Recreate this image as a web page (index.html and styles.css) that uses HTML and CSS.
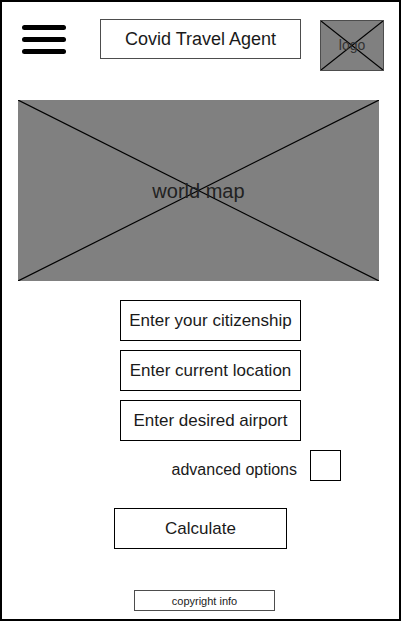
FILE: index.html
```html
<!DOCTYPE html>
<html lang="en">
<head>
<meta charset="utf-8">
<title>Covid Travel Agent</title>
<link rel="stylesheet" href="styles.css">
</head>
<body>
<div class="frame">
  <header class="header">
    <svg class="menu" width="45" height="32" viewBox="0 0 45 32" aria-label="menu">
      <line x1="2.5" y1="3.5" x2="41.5" y2="3.5"/>
      <line x1="2.5" y1="15.5" x2="41.5" y2="15.5"/>
      <line x1="2.5" y1="27.5" x2="41.5" y2="27.5"/>
    </svg>
    <div class="title">Covid Travel Agent</div>
    <div class="placeholder logo">
      <svg class="cross" viewBox="0 0 100 100" preserveAspectRatio="none"><line x1="0" y1="0" x2="100" y2="100" vector-effect="non-scaling-stroke"/><line x1="100" y1="0" x2="0" y2="100" vector-effect="non-scaling-stroke"/></svg>
      <span class="ph-label logo-label">logo</span>
    </div>
  </header>
  <div class="placeholder map">
    <svg class="cross" viewBox="0 0 100 100" preserveAspectRatio="none"><line x1="0" y1="0" x2="100" y2="100" vector-effect="non-scaling-stroke"/><line x1="100" y1="0" x2="0" y2="100" vector-effect="non-scaling-stroke"/></svg>
    <span class="ph-label map-label">world map</span>
  </div>
  <div class="form">
    <div class="field">Enter your citizenship</div>
    <div class="field">Enter current location</div>
    <div class="field">Enter desired airport</div>
  </div>
  <div class="advanced">
    <span class="adv-label">advanced options</span>
    <span class="checkbox"></span>
  </div>
  <div class="calc">Calculate</div>
  <div class="copyright">copyright info</div>
</div>
</body>
</html>
```

FILE: styles.css
```css
html, body {
  margin: 0;
  padding: 0;
  background: #fff;
}
body {
  font-family: "Liberation Sans", Arial, sans-serif;
  color: #1a1a1a;
}
.frame {
  width: 401px;
  height: 621px;
  box-sizing: border-box;
  border: 2px solid #000;
  display: flex;
  flex-direction: column;
  align-items: flex-start;
}
.header {
  display: flex;
  align-items: flex-start;
  height: 69px;
}
.menu {
  margin: 22px 0 0 20px;
  display: block;
}
.menu line {
  stroke: #000;
  stroke-width: 5;
  stroke-linecap: round;
}
.title {
  margin: 17px 0 0 33px;
  width: 201px;
  height: 40px;
  box-sizing: border-box;
  border: 1px solid #4d4d4d;
  display: flex;
  align-items: center;
  justify-content: center;
  font-size: 18px;
  color: #1a1a1a;
}
.placeholder {
  display: grid;
  background: #808080;
  box-sizing: border-box;
}
.placeholder > * {
  grid-area: 1 / 1;
}
.cross {
  width: 100%;
  height: 100%;
  display: block;
}
.cross line {
  stroke: #000;
  stroke-width: 1.2;
}
.ph-label {
  align-self: center;
  justify-self: center;
  color: #222;
}
.logo {
  margin: 18px 0 0 19px;
  width: 64px;
  height: 51px;
  border: 1px solid #4d4d4d;
}
.logo-label {
  font-size: 14px;
  color: #333;
  margin-bottom: 2px;
}
.map {
  margin: 29px 0 0 16px;
  width: 361px;
  height: 181px;
}
.map-label {
  font-size: 20px;
  margin-top: 2px;
}
.form {
  margin: 19px 0 0 118px;
  display: flex;
  flex-direction: column;
  gap: 9px;
}
.field, .calc {
  width: 181px;
  height: 41px;
  box-sizing: border-box;
  border: 1px solid #000;
  display: flex;
  align-items: center;
  justify-content: center;
  font-size: 17px;
}
.advanced {
  margin-top: 9px;
  align-self: stretch;
  display: flex;
  justify-content: flex-end;
  align-items: flex-start;
  padding-right: 58px;
}
.adv-label {
  font-size: 16px;
  margin: 11px 13px 0 0;
  line-height: 18px;
}
.checkbox {
  width: 31px;
  height: 31px;
  box-sizing: border-box;
  border: 1px solid #000;
}
.calc {
  margin: 27px 0 0 112px;
  width: 173px;
}
.copyright {
  margin: 41px 0 0 132px;
  width: 141px;
  height: 21px;
  box-sizing: border-box;
  border: 1px solid #4d4d4d;
  display: flex;
  align-items: center;
  justify-content: center;
  font-size: 11px;
}
```
